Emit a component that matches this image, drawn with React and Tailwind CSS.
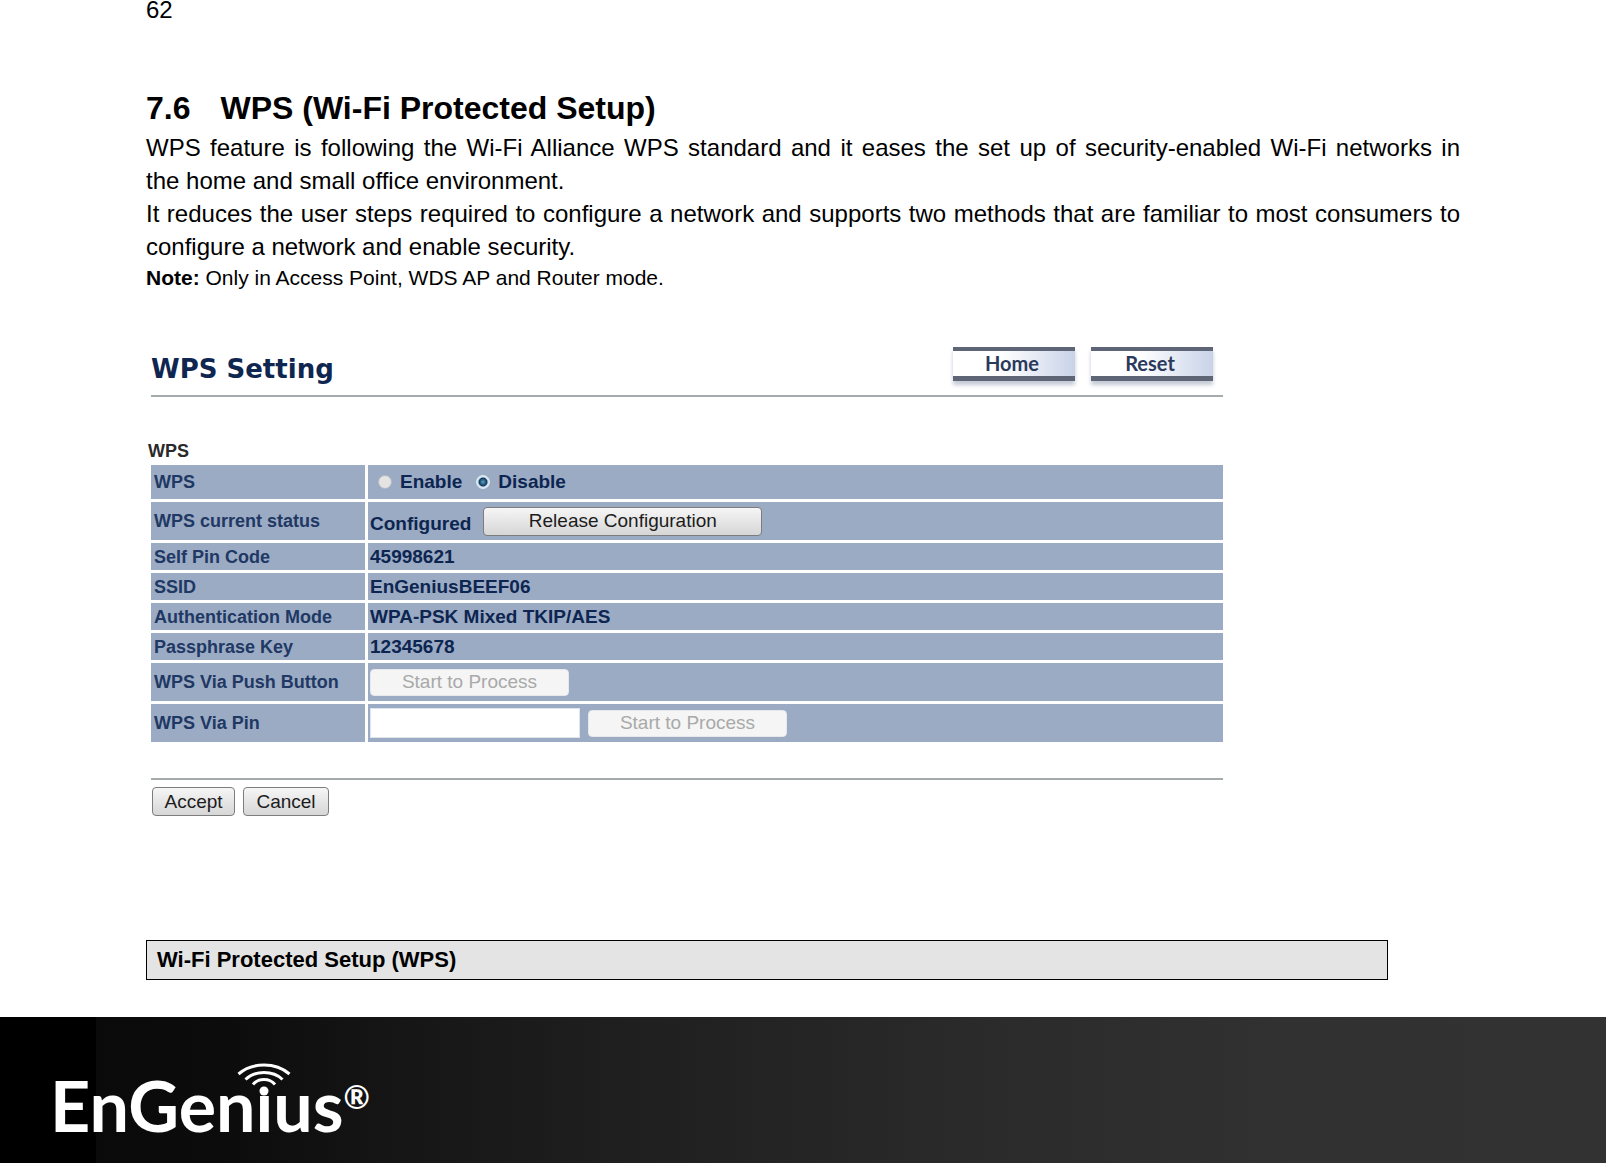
import React, { useState } from 'react';

const NavButton = ({ children }) => (
  <button
    type="button"
    className="h-[34px] w-[122px] border-t-4 border-b-[5px] border-[#5d6577] bg-linear-to-r from-white from-40% to-[#c9d3e8] pr-1 pb-0.5 font-[Lato,sans-serif] text-[20px] leading-5 font-bold text-[#2b3a5c] shadow-[0_4px_4px_#c5cad6]"
  >
    {children}
  </button>
);

const PushButton = ({ className, ...props }) => (
  <button
    type="button"
    className={`rounded-[4px] text-[19px] leading-6 font-normal border border-[#7d7d7d] bg-linear-to-b from-[#f6f6f6] to-[#d6d6d6] text-[#1c1c1c] disabled:border-[#e6e8ec] disabled:from-[#f5f5f5] disabled:to-[#f5f5f5] disabled:text-[#a9a9a9] ${className}`}
    {...props}
  />
);

const Row = ({ label, htmlFor, height, children }) => (
  <tr className={height}>
    <th
      scope="row"
      className="w-[217px] border-r-3 border-b-3 border-white bg-[#9babc3] pl-[3px] text-left text-[18px] leading-6 font-bold text-[#1f3864]"
    >
      {htmlFor ? <label htmlFor={htmlFor}>{label}</label> : label}
    </th>
    <td className="border-b-3 border-white bg-[#9babc3] pl-[2px] text-[19px] leading-6 font-bold text-[#0d2551]">
      {children}
    </td>
  </tr>
);

const Radio = ({ id, label, checked, onChange }) => (
  <div className="flex items-center gap-2">
    <input
      type="radio"
      id={id}
      name="wps"
      checked={checked}
      onChange={onChange}
      className="size-[14px] appearance-none rounded-full border border-[#b4bac4] bg-[#e4e4e2] checked:border-[#dbe9f2] checked:bg-radial checked:from-[#4c8fb0] checked:from-10% checked:via-[#123a5e] checked:via-45% checked:to-[#d5e6f0] checked:to-60%"
    />
    <label htmlFor={id}>{label}</label>
  </div>
);

const WpsPanel = () => {
  const [mode, setMode] = useState('disable');
  const [pin, setPin] = useState('');

  return (
    <section className="mt-[54px] ml-[5px] max-w-[1072px]">
      <div className="flex h-[50px] items-start justify-between border-b-2 border-[#a5abad] pr-[10px]">
        <h2 className="pt-[6px] font-['DejaVu_Sans',sans-serif] text-[26px] leading-8 font-bold text-[#0f2750]">
          WPS Setting
        </h2>
        <div className="flex gap-4">
          <NavButton>Home</NavButton>
          <NavButton>Reset</NavButton>
        </div>
      </div>

      <h3 className="mt-[41px] -ml-[3px] text-[18px] leading-[27px] font-bold text-[#2a2a2a]">WPS</h3>
      <table className="w-full table-fixed border-separate border-spacing-0">
        <tbody>
          <Row label="WPS" height="h-[37px]">
            <div className="flex items-center gap-[14px] pl-2">
              <Radio id="enable" label="Enable" checked={mode === 'enable'} onChange={() => setMode('enable')} />
              <Radio id="disable" label="Disable" checked={mode === 'disable'} onChange={() => setMode('disable')} />
            </div>
          </Row>
          <Row label="WPS current status" height="h-[41px]">
            <div className="flex items-end gap-3">
              <span>Configured</span>
              <PushButton className="h-[29px] w-[279px]">Release Configuration</PushButton>
            </div>
          </Row>
          <Row label="Self Pin Code" height="h-[30px]">45998621</Row>
          <Row label="SSID" height="h-[30px]">EnGeniusBEEF06</Row>
          <Row label="Authentication Mode" height="h-[30px]">WPA-PSK Mixed TKIP/AES</Row>
          <Row label="Passphrase Key" height="h-[30px]">12345678</Row>
          <Row label="WPS Via Push Button" height="h-[41px]">
            <PushButton disabled className="block h-[27px] w-[199px]">Start to Process</PushButton>
          </Row>
          <Row label="WPS Via Pin" htmlFor="pin" height="h-[41px]">
            <div className="flex items-center gap-2">
              <input
                id="pin"
                type="text"
                value={pin}
                onChange={(e) => setPin(e.target.value)}
                className="h-[30px] w-[210px] border border-[#dfe5ec] bg-white px-1"
              />
              <PushButton disabled className="h-[27px] w-[199px]">Start to Process</PushButton>
            </div>
          </Row>
        </tbody>
      </table>

      <div className="mt-[33px] flex gap-2 border-t-2 border-[#a5abad] pt-[7px] pl-px">
        <PushButton className="h-[29px] w-[83px]">Accept</PushButton>
        <PushButton className="h-[29px] w-[86px]">Cancel</PushButton>
      </div>
    </section>
  );
};

const Logo = () => (
  <div className="flex items-start font-[Lato,sans-serif] font-bold text-white">
    <span className="text-[70px] leading-[80px]">
      EnGen
      <span className="relative inline-block">
        {/* the dot of the i belongs to the signal mark */}
        <span className="inline-block [clip-path:inset(29px_0_0_0)]">i</span>
        <svg
          viewBox="0 0 54 34"
          fill="none"
          stroke="white"
          strokeWidth="3"
          className="absolute -top-[3px] left-1/2 h-[34px] w-[54px] -translate-x-1/2"
        >
          <path d="M1.500 12Q12 3 27 3T52.500 12" />
          <path d="M8.500 17.500Q15.500 10.500 27 10.500T45.500 17.500" />
          <path d="M16 22.500Q20 17.500 27 17.500T38 22.500" />
          <circle cx="27" cy="29" r="4.500" fill="white" stroke="none" />
        </svg>
      </span>
      us
    </span>
    <span className="pt-3 text-[32px] leading-[40px]">®</span>
  </div>
);

const App = () => {
  return (
    <div className="flex min-h-screen flex-col bg-white font-['Liberation_Sans',Arial,sans-serif] text-black">
      <main className="flex-1 px-[146px]">
        <p className="text-[24px] leading-5">62</p>
        <h1 className="mt-[68px] flex gap-[30px] text-[32px] leading-10 font-bold">
          <span>7.6</span>
          <span>WPS (Wi-Fi Protected Setup)</span>
        </h1>
        <div className="mt-[3px] text-justify text-[24px] leading-[33px]">
          <p>
            WPS feature is following the Wi-Fi Alliance WPS standard and it eases the set up of security-enabled Wi-Fi
            networks in the&nbsp;home and small office environment.
          </p>
          <p>
            It reduces the user steps required to configure a network and supports two methods that are familiar to most
            consumers to configure a network and enable security.
          </p>
        </div>
        <p className="text-[21px] leading-[30px]">
          <b>Note:</b> Only in Access Point, WDS AP and Router mode.
        </p>

        <WpsPanel />

        <h2 className="mt-[124px] mb-[35px] max-w-[1242px] border border-black bg-[#e4e4e4] px-[10px] text-[22px] leading-[38px] font-bold">
          Wi-Fi Protected Setup (WPS)
        </h2>
      </main>

      <footer className="h-[146px] bg-[linear-gradient(90deg,#000_0%,#000_6%,#0a0a0a_6%,#0c0c0c_14%,#151515_24%,#1e1e1e_37%,#2b2b2b_62%,#313131_80%,#323232_100%)] pt-12 pl-[50px]">
        <Logo />
      </footer>
    </div>
  );
};

export default App;
